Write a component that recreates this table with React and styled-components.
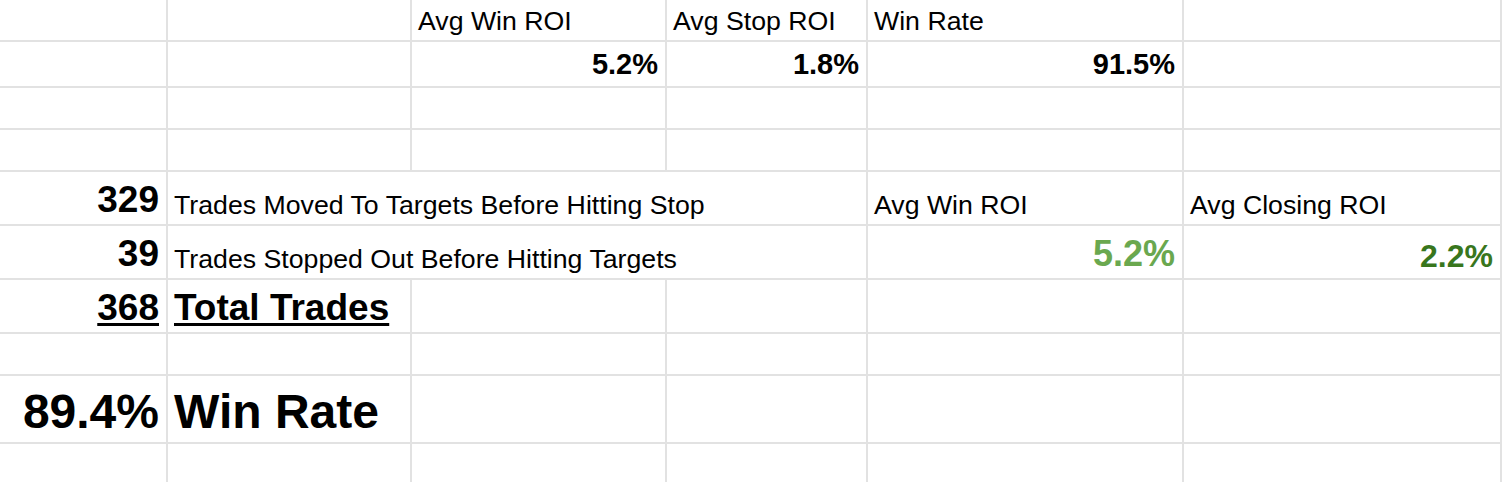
import React from 'react'
import styled, { createGlobalStyle } from 'styled-components'

const GlobalStyle = createGlobalStyle`
	html, body {
		margin: 0;
		padding: 0;
		background: #ffffff;
		overflow: hidden;
	}
	body {
		font-family: 'Liberation Sans', Arial, sans-serif;
		color: #000000;
	}
`

const Sheet = styled.div`
	display: grid;
	grid-template-columns: 168px 244px 255px 201px 316px 318px;
	grid-template-rows: 42px 46px 42px 42px 54px 54px 54px 42px 68px 46px;
	width: 1502px;
`

const Cell = styled.div`
	grid-column: span ${(p) => p.span || 1};
	display: flex;
	align-items: flex-end;
	justify-content: ${(p) => (p.right ? 'flex-end' : 'flex-start')};
	padding: 0 7px ${(p) => p.lift || 3}px 6px;
	border-right: 2px solid #e2e2e2;
	border-bottom: 2px solid #e2e2e2;
	white-space: nowrap;
	min-width: 0;
`

const Label = styled.span`
	font-size: 26.7px;
	line-height: normal;
`

const Value = styled.span`
	font-size: ${(p) => p.size || 29}px;
	font-weight: 700;
	line-height: normal;
	color: ${(p) => p.color || '#000000'};
	text-decoration: ${(p) => (p.underline ? 'underline' : 'none')};
	text-decoration-thickness: 3px;
	text-underline-offset: 3px;
`

const EmptyRow = () => (
	<>
		<Cell />
		<Cell />
		<Cell />
		<Cell />
		<Cell />
		<Cell />
	</>
)

export default function App() {
	return (
		<>
			<GlobalStyle />
			<Sheet>
				<Cell />
				<Cell />
				<Cell>
					<Label>Avg Win ROI</Label>
				</Cell>
				<Cell>
					<Label>Avg Stop ROI</Label>
				</Cell>
				<Cell>
					<Label>Win Rate</Label>
				</Cell>
				<Cell />

				<Cell />
				<Cell />
				<Cell right lift={5}>
					<Value>5.2%</Value>
				</Cell>
				<Cell right lift={5}>
					<Value>1.8%</Value>
				</Cell>
				<Cell right lift={5}>
					<Value>91.5%</Value>
				</Cell>
				<Cell />

				<EmptyRow />
				<EmptyRow />

				<Cell right>
					<Value size={37}>329</Value>
				</Cell>
				<Cell span={3}>
					<Label>Trades Moved To Targets Before Hitting Stop</Label>
				</Cell>
				<Cell>
					<Label>Avg Win ROI</Label>
				</Cell>
				<Cell>
					<Label>Avg Closing ROI</Label>
				</Cell>

				<Cell right>
					<Value size={37}>39</Value>
				</Cell>
				<Cell span={3}>
					<Label>Trades Stopped Out Before Hitting Targets</Label>
				</Cell>
				<Cell right>
					<Value size={36} color='#6aa84f'>5.2%</Value>
				</Cell>
				<Cell right>
					<Value size={32} color='#38761d'>2.2%</Value>
				</Cell>

				<Cell right>
					<Value size={37} underline>368</Value>
				</Cell>
				<Cell>
					<Value size={37} underline>Total Trades</Value>
				</Cell>
				<Cell />
				<Cell />
				<Cell />
				<Cell />

				<EmptyRow />

				<Cell right>
					<Value size={48}>89.4%</Value>
				</Cell>
				<Cell>
					<Value size={48}>Win Rate</Value>
				</Cell>
				<Cell />
				<Cell />
				<Cell />
				<Cell />

				<EmptyRow />
			</Sheet>
		</>
	)
}
